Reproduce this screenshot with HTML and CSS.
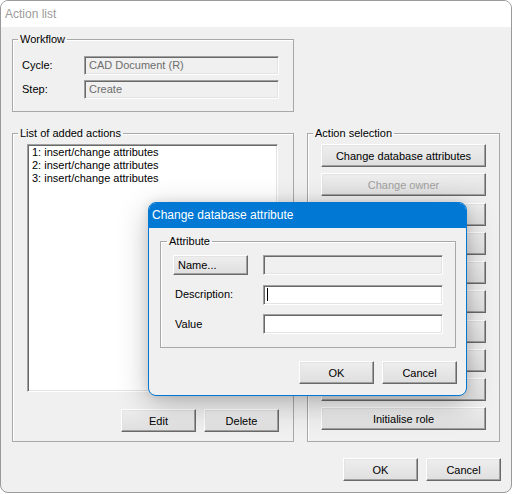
FILE: index.html
```html
<!DOCTYPE html>
<html>
<head>
<meta charset="utf-8">
<link rel="stylesheet" href="styles.css">
</head>
<body>
<div class="window">
  <div class="titlebar">Action list</div>
  <div class="client">
    <fieldset class="group workflow">
      <legend>Workflow</legend>
      <div class="form-grid">
        <span class="lbl">Cycle:</span><div class="field disabled">CAD Document (R)</div>
        <span class="lbl">Step:</span><div class="field disabled">Create</div>
      </div>
    </fieldset>
    <div class="groups">
      <fieldset class="group list-group">
        <legend>List of added actions</legend>
        <div class="listbox">
          <div class="item">1: insert/change attributes</div>
          <div class="item">2: insert/change attributes</div>
          <div class="item">3: insert/change attributes</div>
        </div>
        <div class="btn-row">
          <button class="btn">Edit</button>
          <button class="btn">Delete</button>
        </div>
      </fieldset>
      <fieldset class="group action-group">
        <legend>Action selection</legend>
        <div class="action-buttons">
          <button class="btn wide">Change database attributes</button>
          <button class="btn wide" disabled>Change owner</button>
          <button class="btn wide"></button>
          <button class="btn wide"></button>
          <button class="btn wide"></button>
          <button class="btn wide"></button>
          <button class="btn wide"></button>
          <button class="btn wide"></button>
          <button class="btn wide"></button>
          <button class="btn wide">Initialise role</button>
        </div>
      </fieldset>
    </div>
    <div class="footer">
      <button class="btn">OK</button>
      <button class="btn">Cancel</button>
    </div>
  </div>

  <div class="dialog">
    <div class="dlg-title">Change database attribute</div>
    <div class="dlg-body">
      <fieldset class="group attr-group">
        <legend>Attribute</legend>
        <div class="attr-grid">
          <button class="btn name-btn">Name...</button><div class="field disabled"></div>
          <span class="lbl">Description:</span><div class="field"><span class="caret"></span></div>
          <span class="lbl">Value</span><div class="field"></div>
        </div>
      </fieldset>
      <div class="dlg-footer">
        <button class="btn">OK</button>
        <button class="btn">Cancel</button>
      </div>
    </div>
  </div>
</div>
</body>
</html>
```

FILE: styles.css
```css
html, body {
  margin: 0;
  padding: 0;
  background: #ffffff;
}
body {
  font-family: "Liberation Sans", Arial, sans-serif;
  font-size: 11px;
  color: #000;
}
.window {
  position: relative;
  box-sizing: border-box;
  width: 512px;
  height: 493px;
  border: 1px solid #9a9a9a;
  border-radius: 8px;
  overflow: hidden;
  background: #f0f0f0;
  display: flex;
  flex-direction: column;
}
.titlebar {
  height: 26px;
  line-height: 26px;
  background: #fff;
  color: #9b9b9b;
  font-size: 12px;
  padding-left: 4px;
}
.client {
  flex: 1;
  padding: 0 11px;
  display: flex;
  flex-direction: column;
}
.group {
  margin: 0;
  box-sizing: border-box;
  min-width: 0;
  border: 1px solid #a8a8a8;
  box-shadow: inset 1px 1px 0 #fff;
}
.group legend {
  padding: 0 2px;
  margin-left: -4px;
  line-height: 12px;
  font-size: 11px;
}
.workflow {
  margin-top: 6px;
  width: 282px;
  padding: 11px 14px 12px 9px;
}
.form-grid {
  display: grid;
  grid-template-columns: 62px 195px;
  row-gap: 5px;
  align-items: center;
}
.lbl {
  line-height: 13px;
}
.field {
  box-sizing: border-box;
  height: 19px;
  line-height: 17px;
  padding-left: 4px;
  background: #fff;
  border: 1px solid;
  border-color: #a0a0a0 #ffffff #ffffff #a0a0a0;
  box-shadow: inset 1px 1px 0 #696969, inset -1px -1px 0 #e3e3e3;
  white-space: nowrap;
  overflow: hidden;
}
.field.disabled {
  background: #f0f0f0;
  color: #6d6d6d;
}
.groups {
  margin-top: 15px;
  display: flex;
  height: 315px;
}
.list-group {
  width: 282px;
  padding: 5px 13px 9px 14px;
  display: flex;
  flex-direction: column;
}
.list-group legend {
  margin-left: -9px;
}
.listbox {
  box-sizing: border-box;
  width: 251px;
  height: 248px;
  background: #fff;
  border: 1px solid;
  border-color: #a0a0a0 #ffffff #ffffff #a0a0a0;
  box-shadow: inset 1px 1px 0 #696969, inset -1px -1px 0 #e3e3e3;
  padding: 1px 3px;
}
.item {
  line-height: 13px;
  padding-left: 1px;
}
.btn-row {
  margin-top: 17px;
  display: flex;
  justify-content: flex-end;
  gap: 8px;
  margin-right: 1px;
}
.btn {
  box-sizing: border-box;
  width: 75px;
  height: 23px;
  padding: 0;
  margin: 0;
  font-family: "Liberation Sans", Arial, sans-serif;
  font-size: 11px;
  color: #000;
  background: linear-gradient(#eeeeee, #dfdfdf);
  border: 1px solid;
  border-color: #ffffff #696969 #696969 #ffffff;
  box-shadow: inset -1px -1px 0 #a0a0a0, inset 1px 1px 0 #e3e3e3;
  text-align: center;
}
.btn:disabled {
  color: #a0a0a0;
}
.action-group {
  margin-left: 13px;
  width: 193px;
  padding: 5px 13px 9px 13px;
}
.action-group legend {
  margin-left: -8px;
}
.action-buttons {
  display: flex;
  flex-direction: column;
  gap: 6.25px;
}
.btn.wide {
  width: 165px;
}
.footer {
  margin-top: 16px;
  display: flex;
  justify-content: flex-end;
  gap: 8px;
  margin-right: -1px;
}

/* modal dialog */
.dialog {
  position: absolute;
  left: 147px;
  top: 201px;
  box-sizing: border-box;
  width: 319px;
  height: 194px;
  border: 1px solid #0078d4;
  border-radius: 8px;
  background: #f0f0f0;
  overflow: hidden;
  box-shadow: 0 8px 30px rgba(0, 0, 0, 0.26), 0 0 10px rgba(0, 0, 0, 0.1);
}
.dlg-title {
  height: 25px;
  line-height: 25px;
  background: #0078d4;
  color: #fff;
  font-size: 12px;
  padding-left: 3px;
}
.dlg-body {
  padding: 7px 10px 0 11px;
  display: flex;
  flex-direction: column;
}
.attr-group {
  width: 296px;
  padding: 8px 12px 13px 12px;
}
.attr-group legend {
  margin-left: -6px;
}
.attr-grid {
  display: grid;
  grid-template-columns: 90px 180px;
  grid-auto-rows: 20px;
  row-gap: 9.5px;
  align-items: center;
}
.attr-grid .field {
  height: 20px;
  position: relative;
}
.attr-grid .lbl {
  padding-left: 2px;
}
.name-btn {
  width: 75px;
  height: 20px;
  text-align: left;
  padding-left: 4px;
}
.caret {
  display: inline-block;
  width: 1px;
  height: 13px;
  background: #000;
  vertical-align: middle;
  margin-left: -1px;
}
.dlg-footer {
  margin-top: 13px;
  display: flex;
  justify-content: flex-end;
  gap: 8px;
  margin-right: -1px;
}
```
